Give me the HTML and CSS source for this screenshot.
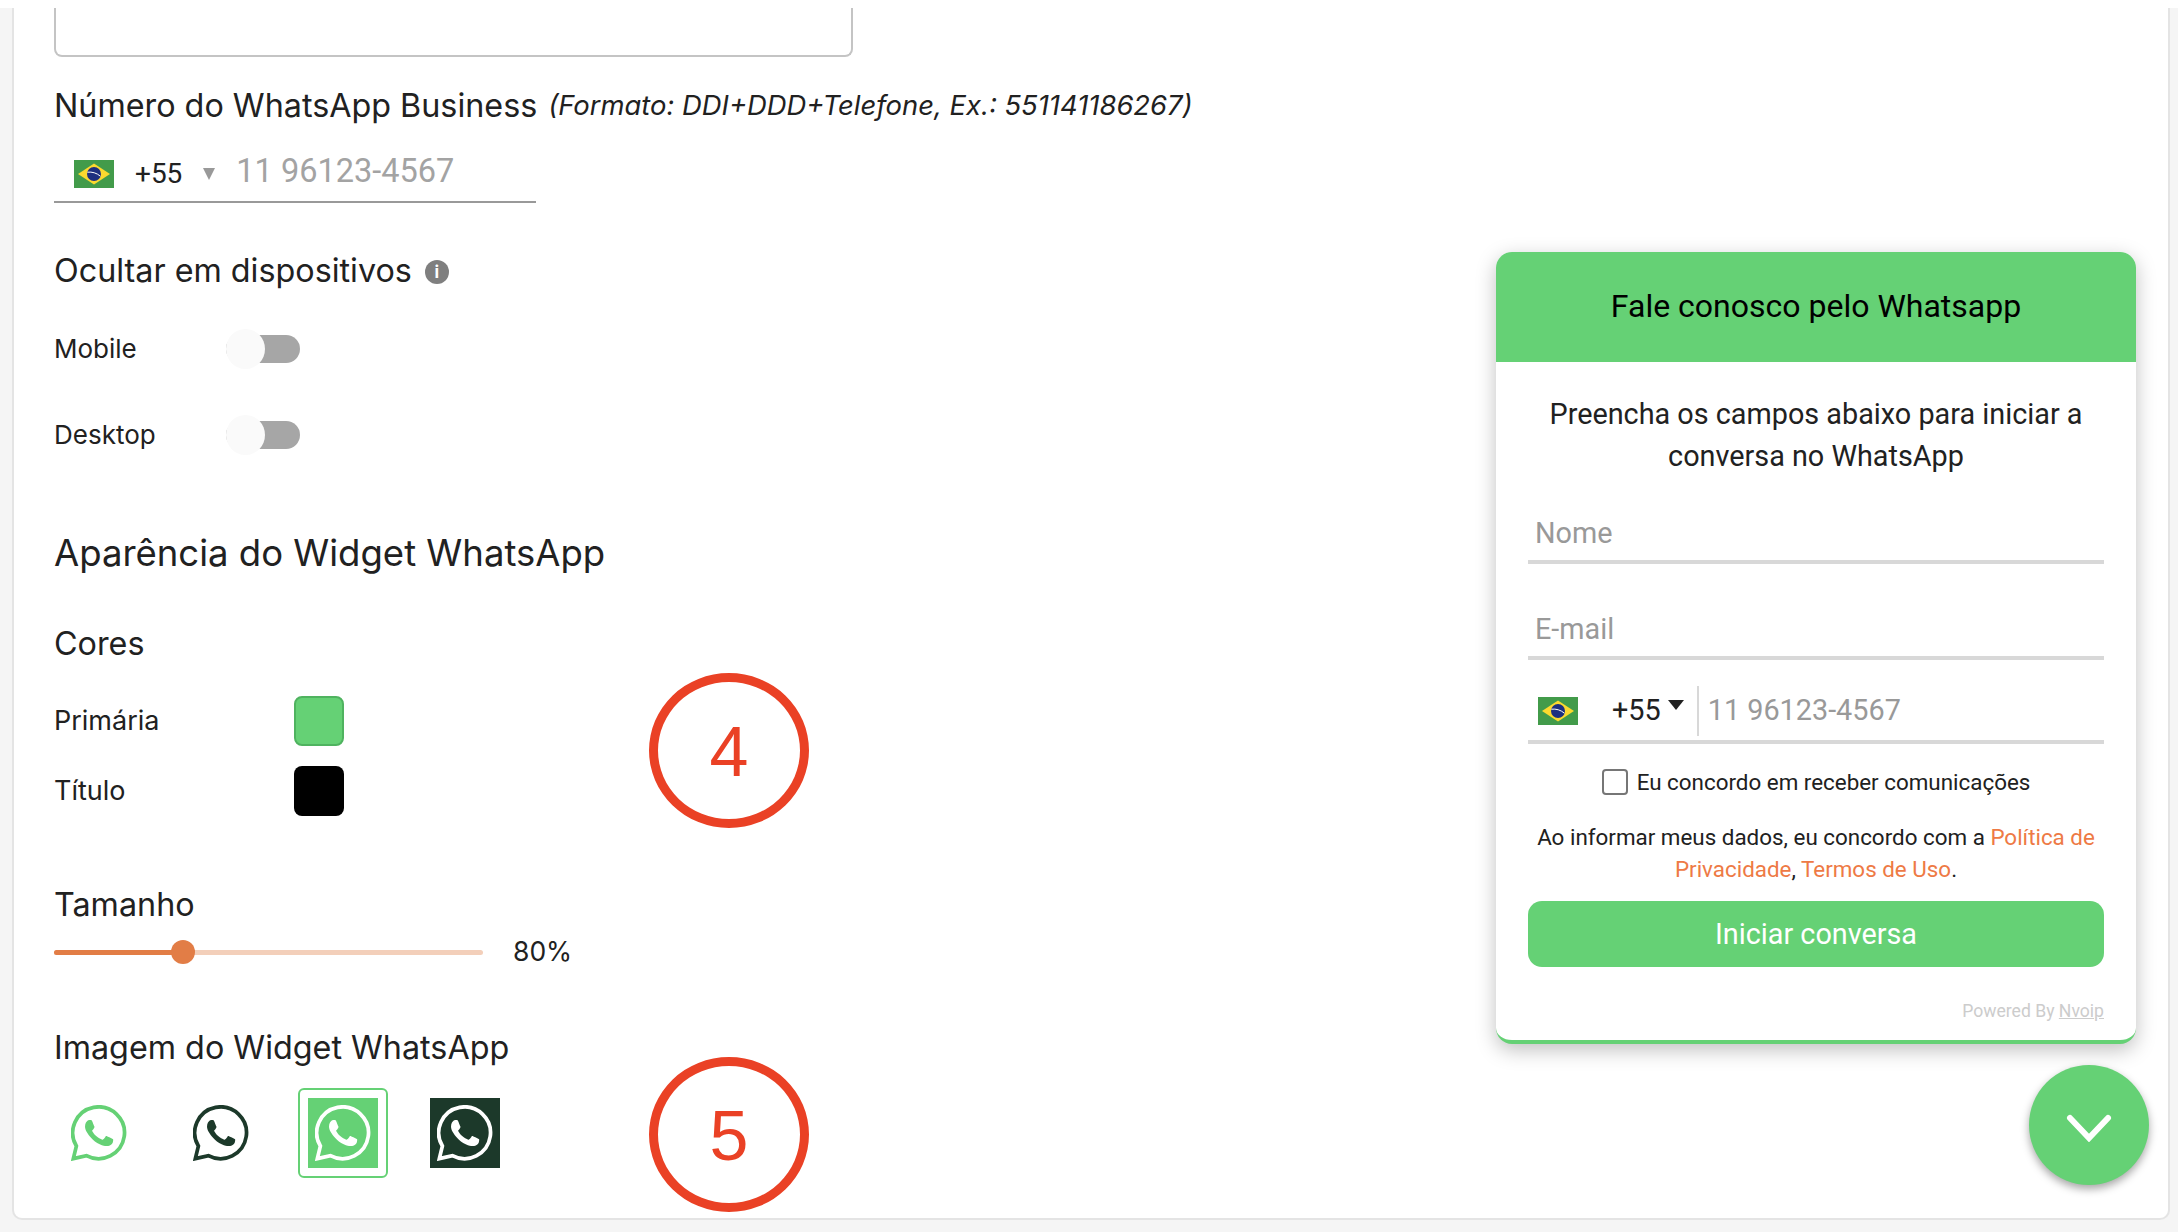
FILE: index.html
```html
<!DOCTYPE html>
<html lang="pt-BR">
<head>
    <meta charset="UTF-8">
    <meta name="viewport" content="width=device-width, initial-scale=1.0">
    <title>Widget WhatsApp</title>
    <link rel="stylesheet" href="styles.css">
</head>
<body>

<svg class="defs">
    <symbol id="wa" viewBox="0 0 24 24">
        <path class="wa-ring" d="M1 23 2.3 17.6A11.1 11.1 0 1 1 6.6 21.7Z"/>
        <path class="wa-phone" d="M17.472 14.382c-.297-.149-1.758-.867-2.03-.967-.273-.099-.471-.148-.67.15-.197.297-.767.966-.94 1.164-.173.199-.347.223-.644.075-.297-.15-1.255-.463-2.39-1.475-.883-.788-1.48-1.761-1.653-2.059-.173-.297-.018-.458.13-.606.134-.133.298-.347.446-.52.149-.174.198-.298.298-.497.099-.198.05-.371-.025-.52-.075-.149-.669-1.612-.916-2.207-.242-.579-.487-.5-.669-.51-.173-.008-.371-.01-.57-.01-.198 0-.52.074-.792.372-.272.297-1.04 1.016-1.04 2.479 0 1.462 1.065 2.875 1.213 3.074.149.198 2.096 3.2 5.077 4.487.709.306 1.262.489 1.694.625.712.227 1.36.195 1.871.118.571-.085 1.758-.719 2.006-1.413.248-.694.248-1.289.173-1.413-.074-.124-.272-.198-.57-.347"/>
    </symbol>
    <symbol id="flag-br" viewBox="0 0 40 28">
        <rect width="40" height="28" fill="#429b4a"/>
        <path d="M20 3.5 36 14 20 24.5 4 14z" fill="#fbd92f"/>
        <circle cx="20" cy="14" r="7" fill="#1d2f7f"/>
        <path d="M13.4 12.2c4.6-.6 9.4.8 13 4" fill="none" stroke="#fff" stroke-width="1"/>
    </symbol>
</svg>

<div class="top-strip"></div>

<div class="card">
    <div class="textarea-box"></div>

    <div class="label-row field-label"><span>Número do WhatsApp Business</span><em class="hint">(Formato: DDI+DDD+Telefone, Ex.: 551141186267)</em></div>
    <div class="phone-field">
        <svg class="flag"><use href="#flag-br"/></svg>
        <span class="ddi">+55</span>
        <span class="ddi-caret"></span>
        <input class="phone-input" type="text" placeholder="11 96123-4567">
    </div>

    <div class="label-row hide-title">
        <span>Ocultar em dispositivos</span>
        <span class="info-icon">i</span>
    </div>
    <div class="toggle-row mobile-row">
        <span class="row-name">Mobile</span>
        <div class="toggle"><span class="knob"></span></div>
    </div>
    <div class="toggle-row desktop-row">
        <span class="row-name">Desktop</span>
        <div class="toggle"><span class="knob"></span></div>
    </div>

    <h2 class="section-title">Aparência do Widget WhatsApp</h2>

    <div class="label-row colors-title">Cores</div>
    <div class="color-row primary-row">
        <span class="row-name">Primária</span>
        <span class="swatch swatch-green"></span>
    </div>
    <div class="color-row title-row">
        <span class="row-name">Título</span>
        <span class="swatch swatch-black"></span>
    </div>

    <div class="label-row size-title">Tamanho</div>
    <div class="slider-row">
        <div class="slider">
            <div class="slider-fill" style="width: 129px"></div>
            <span class="slider-thumb" style="left: 129px"></span>
        </div>
        <span class="slider-value">80%</span>
    </div>

    <div class="label-row image-title">Imagem do Widget WhatsApp</div>
    <div class="icon-options">
        <div class="icon-option"><div class="icon-img"><svg class="wa-icon light-green"><use href="#wa"/></svg></div></div>
        <div class="icon-option"><div class="icon-img"><svg class="wa-icon dark-green"><use href="#wa"/></svg></div></div>
        <div class="icon-option selected"><div class="icon-img bg-green"><svg class="wa-icon white"><use href="#wa"/></svg></div></div>
        <div class="icon-option"><div class="icon-img bg-dark"><svg class="wa-icon white"><use href="#wa"/></svg></div></div>
    </div>
</div>

<!-- red marks drawn over the screenshot -->
<div class="mark mark-4">4</div>
<div class="mark mark-5">5</div>

<!-- widget preview -->
<div class="widget">
    <div class="widget-header">Fale conosco pelo Whatsapp</div>
    <div class="widget-body">
        <p class="widget-intro">Preencha os campos abaixo para iniciar a conversa no WhatsApp</p>
        <input class="widget-input name-input" type="text" placeholder="Nome">
        <input class="widget-input email-input" type="text" placeholder="E-mail">
        <div class="widget-phone">
            <svg class="flag"><use href="#flag-br"/></svg>
            <span class="widget-ddi">+55</span>
            <span class="widget-caret"></span>
            <input class="widget-phone-input" type="text" placeholder="11 96123-4567">
        </div>
        <label class="consent">
            <input type="checkbox" class="consent-box">
            <span>Eu concordo em receber comunicações</span>
        </label>
        <p class="terms">Ao informar meus dados, eu concordo com a <a href="#">Política de Privacidade</a>, <a href="#">Termos de Uso</a>.</p>
        <button class="start-btn">Iniciar conversa</button>
        <div class="powered">Powered By <a href="#">Nvoip</a></div>
    </div>
</div>

<button class="fab">
    <svg width="46" height="28" viewBox="0 0 46 28"><path d="M4 4 23 24 42 4" fill="none" stroke="#fff" stroke-width="6" stroke-linecap="round" stroke-linejoin="miter"/></svg>
</button>

</body>
</html>
```

FILE: styles.css
```css
* {
    box-sizing: border-box;
}
body {
    font-family: Inter, sans-serif;
    color: #212121;
    background-color: #f5f5f5;
    margin: 0;
    padding: 0;
    height: 1232px;
    overflow: hidden;
    position: relative;
}
.defs {
    display: none;
}
.top-strip {
    height: 8px;
    background-color: #fff;
}
.card {
    width: 2158px;
    height: 1212px;
    margin-left: 12px;
    padding: 0 0 0 40px;
    background-color: #fff;
    border: 2px solid #e4e4e4;
    border-top: none;
    border-radius: 0 0 10px 10px;
}
.textarea-box {
    width: 799px;
    height: 49px;
    border: 2px solid #c4c4c4;
    border-top: none;
    border-radius: 0 0 8px 8px;
}
.label-row {
    height: 40px;
    padding-bottom: 2px;
    display: flex;
    align-items: center;
    font-size: 32.3px;
    white-space: pre;
}
.field-label {
    margin-top: 28px;
    padding-bottom: 0;
}
.hint {
    margin-left: 11px;
    font-size: 27.4px;
}
.phone-field {
    margin-top: 22px;
    width: 482px;
    height: 56px;
    border-bottom: 2px solid #999;
    display: flex;
    align-items: center;
    position: relative;
    font-family: Roboto, sans-serif;
    padding-left: 20px;
}
.flag {
    width: 40px;
    height: 28px;
    flex: none;
}
.ddi {
    margin-left: 21px;
    padding-bottom: 2px;
    font-size: 28px;
}
.ddi-caret {
    margin-left: 21px;
    border-left: 6px solid transparent;
    border-right: 6px solid transparent;
    border-top: 12px solid #999;
}
.phone-input {
    margin-left: 21px;
    width: 240px;
    border: none;
    outline: none;
    padding: 0;
    font-family: Roboto, sans-serif;
    font-size: 32.5px;
    position: relative;
    top: -3px;
}
.phone-input::placeholder {
    color: #a3a3a3;
}
.hide-title {
    margin-top: 47px;
    padding-bottom: 0;
}
.info-icon {
    width: 24px;
    height: 24px;
    margin: 4px 0 0 13px;
    border-radius: 50%;
    background-color: #7f7f7f;
    color: #fff;
    font-size: 17px;
    font-weight: 700;
    line-height: 24px;
    text-align: center;
}
.toggle-row {
    height: 40px;
    display: flex;
    align-items: center;
}
.mobile-row {
    margin-top: 39px;
}
.desktop-row {
    margin-top: 46px;
}
.row-name {
    font-size: 26px;
    width: 172px;
    padding-bottom: 2px;
}
.toggle {
    width: 74px;
    height: 28px;
    border-radius: 14px;
    background-color: #a6a6a6;
    position: relative;
}
.knob {
    position: absolute;
    left: 0;
    top: -6px;
    width: 39px;
    height: 40px;
    border-radius: 50%;
    background-color: #fafafa;
}
.section-title {
    height: 50px;
    margin: 73px 0 0;
    font-size: 36.5px;
    font-weight: 400;
    line-height: 50px;
}
.colors-title {
    margin-top: 46px;
}
.color-row {
    display: flex;
    align-items: center;
    height: 50px;
}
.color-row .row-name {
    width: 240px;
    font-size: 27px;
}
.primary-row {
    margin-top: 32px;
}
.title-row {
    margin-top: 20px;
}
.swatch {
    width: 50px;
    height: 50px;
    border-radius: 8px;
}
.swatch-green {
    background-color: #65d175;
    border: 2px solid #4fb35f;
}
.swatch-black {
    background-color: #000;
}
.size-title {
    margin-top: 68px;
    padding-bottom: 0;
}
.slider-row {
    margin-top: 13px;
    height: 30px;
    display: flex;
    align-items: center;
}
.slider {
    width: 429px;
    height: 5px;
    border-radius: 3px;
    background-color: #f3cfba;
    position: relative;
}
.slider-fill {
    height: 5px;
    border-radius: 3px;
    background-color: #e27d46;
}
.slider-thumb {
    position: absolute;
    top: -10px;
    margin-left: -12px;
    width: 24px;
    height: 24px;
    border-radius: 50%;
    background-color: #e27d46;
}
.slider-value {
    margin-left: 30px;
    padding-bottom: 2px;
    font-size: 26.5px;
}
.image-title {
    margin-top: 61px;
}
.icon-options {
    margin-top: 20px;
    display: flex;
    gap: 32px;
}
.icon-option {
    width: 90px;
    height: 90px;
    padding: 8px;
    border: 2px solid transparent;
    border-radius: 6px;
}
.icon-option.selected {
    border-color: #65d175;
}
.icon-img {
    width: 70px;
    height: 70px;
    display: flex;
    align-items: center;
    justify-content: center;
}
.bg-green {
    background-color: #65d175;
}
.bg-dark {
    background-color: #1c392a;
}
.wa-icon {
    width: 56px;
    height: 56px;
}
.wa-ring {
    fill: none;
    stroke-width: 1.6;
}
.wa-phone {
    stroke: none;
}
.light-green {
    fill: #65d175;
    stroke: #65d175;
}
.dark-green {
    fill: #1c392a;
    stroke: #1c392a;
}
.white {
    fill: #fff;
    stroke: #fff;
}
.mark {
    position: absolute;
    left: 649px;
    width: 160px;
    height: 155px;
    border: 9px solid #ea4125;
    border-radius: 50%;
    color: #ea4125;
    font-family: "Liberation Sans", sans-serif;
    font-size: 70px;
    line-height: 141px;
    text-align: center;
}
.mark-4 {
    top: 673px;
}
.mark-5 {
    top: 1057px;
}

/* widget */
.widget {
    position: absolute;
    left: 1496px;
    top: 252px;
    width: 640px;
    background-color: #fff;
    border-bottom: 4px solid #65d175;
    border-radius: 16px;
    box-shadow: 0 6px 20px rgba(0, 0, 0, 0.25);
    font-family: Roboto, sans-serif;
    overflow: hidden;
}
.widget-header {
    height: 110px;
    padding-bottom: 2px;
    display: flex;
    align-items: center;
    justify-content: center;
    background-color: #65d175;
    color: #000;
    font-size: 32px;
}
.widget-body {
    padding: 31px 32px 17px;
}
.widget-intro {
    margin: 0;
    font-size: 28.8px;
    line-height: 42px;
    text-align: center;
}
.widget-input {
    display: block;
    width: 100%;
    height: 58px;
    padding: 0 7px;
    border: none;
    border-bottom: 4px solid #d8d8d8;
    outline: none;
    font-family: Roboto, sans-serif;
    font-size: 28.8px;
}
.widget-input::placeholder,
.widget-phone-input::placeholder {
    color: #999;
}
.name-input {
    margin-top: 29px;
}
.email-input {
    margin-top: 38px;
}
.widget-phone {
    margin-top: 22px;
    height: 62px;
    border-bottom: 4px solid #d8d8d8;
    display: flex;
    align-items: center;
    padding-left: 10px;
}
.widget-ddi {
    margin-left: 34px;
    padding-bottom: 2px;
    font-size: 28.8px;
}
.widget-caret {
    margin: 0 13px 12px 7px;
    border-left: 8px solid transparent;
    border-right: 8px solid transparent;
    border-top: 10px solid #212121;
}
.widget-phone-input {
    flex: 1;
    height: 50px;
    padding: 0 0 2px 9px;
    border: none;
    border-left: 2px solid #d8d8d8;
    outline: none;
    font-family: Roboto, sans-serif;
    font-size: 28.8px;
}
.consent {
    margin-top: 22px;
    height: 32px;
    display: flex;
    align-items: center;
    justify-content: center;
    font-size: 22.4px;
}
.consent-box {
    appearance: none;
    width: 26px;
    height: 26px;
    margin: 0 9px 0 0;
    border: 2px solid #767676;
    border-radius: 4px;
}
.terms {
    margin: 23px 0 0;
    font-size: 22.4px;
    line-height: 32px;
    text-align: center;
}
.terms a {
    color: #ee7a45;
    text-decoration: none;
}
.start-btn {
    display: block;
    width: 100%;
    height: 66px;
    margin-top: 16px;
    border: none;
    border-radius: 14px;
    background-color: #65d175;
    color: #fff;
    font-family: Roboto, sans-serif;
    font-size: 28.8px;
}
.powered {
    margin-top: 32px;
    height: 24px;
    line-height: 24px;
    font-size: 17.6px;
    color: #ccc;
    text-align: right;
}
.powered a {
    color: #ccc;
}
.fab {
    position: absolute;
    left: 2029px;
    top: 1065px;
    width: 120px;
    height: 120px;
    padding: 6px 0 0;
    border: none;
    border-radius: 50%;
    background-color: #65d175;
    box-shadow: 0 4px 8px rgba(0, 0, 0, 0.35);
    display: flex;
    align-items: center;
    justify-content: center;
}
```
